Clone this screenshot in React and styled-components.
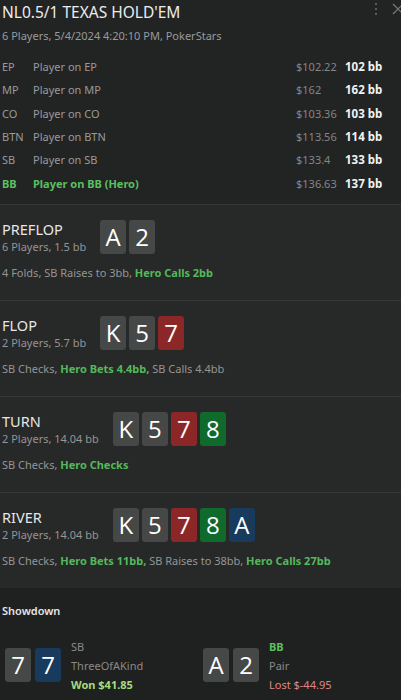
import React from "react";
import styled, { createGlobalStyle } from "styled-components";

const Global = createGlobalStyle`
  html, body { margin: 0; padding: 0; background: #222424; }
  body { font-family: "Noto Sans", "Open Sans", sans-serif; color: #e6e6e6; }
  * { box-sizing: border-box; }
`;

const Page = styled.div`
  width: 401px;
  height: 700px;
  overflow: hidden;
  background: #222424;
  display: flex;
  flex-direction: column;
`;

const Header = styled.header`
  position: relative;
  padding: 0 16px 9px 2px;
`;

const Title = styled.h1`
  margin: 0;
  font-size: 15.5px;
  font-weight: 400;
  line-height: 24px;
  color: #ececec;
`;

const Sub = styled.div`
  margin-top: 4px;
  font-size: 11px;
  line-height: 16px;
  color: #9a9a9a;
`;

const Tools = styled.div`
  position: absolute;
  top: 2px;
  right: -3px;
  display: flex;
  gap: 14px;
  align-items: center;
`;

const Table = styled.div`
  margin-top: 11px;
  display: grid;
  grid-template-columns: 31px 1fr 49px 40px;
  grid-auto-rows: 23.3px;
  align-items: center;
  font-size: 11px;
`;

const Cell = styled.div`
  color: ${(p) => (p.$hero ? "#5cbf60" : p.$dim ? "#858585" : "#9a9a9a")};
  font-weight: ${(p) => (p.$hero ? 700 : 400)};
  white-space: nowrap;
`;

const BB = styled.div`
  color: #f2f2f2;
  font-weight: 700;
  font-size: 11.5px;
  white-space: nowrap;
`;

const Street = styled.section`
  border-top: 1px solid #363838;
  background: #272828;
  padding: 15px 2px 0 2px;
  height: 96px;
`;

const StreetTop = styled.div`
  display: flex;
  align-items: center;
  gap: 14px;
`;

const StreetInfo = styled.div`
  display: flex;
  flex-direction: column;
`;

const StreetName = styled.div`
  font-size: 14.5px;
  line-height: 19px;
  color: #e6e6e6;
`;

const StreetSub = styled.div`
  font-size: 11px;
  line-height: 15px;
  color: #959595;
`;

const Cards = styled.div`
  display: flex;
  gap: ${(p) => p.$gap || 3}px;
`;

const cardColors = {
  n: "#464747",
  h: "#8c2727",
  c: "#0f6a2c",
  d: "#183a5d",
};

const Card = styled.div`
  width: 26px;
  height: 34px;
  border-radius: 3px;
  background: ${(p) => cardColors[p.$s]};
  color: #ffffff;
  font-family: "Open Sans", "Noto Sans", sans-serif;
  font-size: 24px;
  line-height: 34px;
  text-align: center;
`;

const Action = styled.div`
  margin-top: 11px;
  font-size: 11px;
  line-height: 16px;
  color: #959595;
  white-space: nowrap;
`;

const Hero = styled.span`
  color: #53b85a;
  font-weight: 700;
`;

const Showdown = styled.section`
  flex: 1;
  background: #1f2020;
  padding: 15px 0 0 2px;
`;

const ShowTitle = styled.div`
  font-size: 11px;
  font-weight: 600;
  line-height: 16px;
  color: #e6e6e6;
`;

const ShowGrid = styled.div`
  margin-top: 18px;
  padding-left: 3px;
  display: grid;
  grid-template-columns: 198px 198px;
`;

const Seat = styled.div`
  display: flex;
  align-items: center;
  gap: 10px;
`;

const SeatInfo = styled.div`
  display: flex;
  flex-direction: column;
  font-size: 11px;
  line-height: 19px;
`;

const SeatPos = styled.div`
  color: ${(p) => (p.$hero ? "#5cbf60" : "#8a8a8a")};
  font-weight: ${(p) => (p.$hero ? 700 : 400)};
`;

const SeatHand = styled.div`
  color: #8a8a8a;
`;

const Result = styled.div`
  color: ${(p) => (p.$won ? "#a6dc7c" : "#e08585")};
  font-weight: ${(p) => (p.$won ? 700 : 400)};
`;

const players = [
  ["EP", "Player on EP", "$102.22", "102 bb"],
  ["MP", "Player on MP", "$162", "162 bb"],
  ["CO", "Player on CO", "$103.36", "103 bb"],
  ["BTN", "Player on BTN", "$113.56", "114 bb"],
  ["SB", "Player on SB", "$133.4", "133 bb"],
  ["BB", "Player on BB (Hero)", "$136.63", "137 bb", true],
];

const streets = [
  {
    name: "PREFLOP",
    sub: "6 Players, 1.5 bb",
    cards: [["A", "n"], ["2", "n"]],
    action: (
      <>
        4 Folds, SB Raises to 3bb, <Hero>Hero Calls 2bb</Hero>
      </>
    ),
  },
  {
    name: "FLOP",
    sub: "2 Players, 5.7 bb",
    cards: [["K", "n"], ["5", "n"], ["7", "h"]],
    action: (
      <>
        SB Checks, <Hero>Hero Bets 4.4bb,</Hero> SB Calls 4.4bb
      </>
    ),
  },
  {
    name: "TURN",
    sub: "2 Players, 14.04 bb",
    cards: [["K", "n"], ["5", "n"], ["7", "h"], ["8", "c"]],
    action: (
      <>
        SB Checks, <Hero>Hero Checks</Hero>
      </>
    ),
  },
  {
    name: "RIVER",
    sub: "2 Players, 14.04 bb",
    cards: [["K", "n"], ["5", "n"], ["7", "h"], ["8", "c"], ["A", "d"]],
    action: (
      <>
        SB Checks, <Hero>Hero Bets 11bb,</Hero> SB Raises to 38bb,{" "}
        <Hero>Hero Calls 27bb</Hero>
      </>
    ),
  },
];

export default function App() {
  return (
    <Page>
      <Global />
      <Header>
        <Title>NL0.5/1 TEXAS HOLD'EM</Title>
        <Sub>6 Players, 5/4/2024 4:20:10 PM, PokerStars</Sub>
        <Tools>
          <svg width="4" height="14" viewBox="0 0 4 14">
            <circle cx="2" cy="2" r="1" fill="#6f6f6f" />
            <circle cx="2" cy="7" r="1" fill="#6f6f6f" />
            <circle cx="2" cy="12" r="1" fill="#6f6f6f" />
          </svg>
          <svg width="12" height="12" viewBox="0 0 12 12">
            <path d="M1 1 L11 11 M11 1 L1 11" stroke="#7a7a7a" strokeWidth="1.2" />
          </svg>
        </Tools>
        <Table>
          {players.map(([pos, name, usd, bb, hero]) => (
            <React.Fragment key={pos}>
              <Cell $hero={hero}>{pos}</Cell>
              <Cell $hero={hero}>{name}</Cell>
              <Cell $dim>{usd}</Cell>
              <BB>{bb}</BB>
            </React.Fragment>
          ))}
        </Table>
      </Header>
      {streets.map((s) => (
        <Street key={s.name}>
          <StreetTop>
            <StreetInfo>
              <StreetName>{s.name}</StreetName>
              <StreetSub>{s.sub}</StreetSub>
            </StreetInfo>
            <Cards>
              {s.cards.map(([r, suit], i) => (
                <Card key={i} $s={suit}>
                  {r}
                </Card>
              ))}
            </Cards>
          </StreetTop>
          <Action>{s.action}</Action>
        </Street>
      ))}
      <Showdown>
        <ShowTitle>Showdown</ShowTitle>
        <ShowGrid>
          <Seat>
            <Cards $gap={4}>
              <Card $s="n">7</Card>
              <Card $s="d">7</Card>
            </Cards>
            <SeatInfo>
              <SeatPos>SB</SeatPos>
              <SeatHand>ThreeOfAKind</SeatHand>
              <Result $won>Won $41.85</Result>
            </SeatInfo>
          </Seat>
          <Seat>
            <Cards $gap={4}>
              <Card $s="n">A</Card>
              <Card $s="n">2</Card>
            </Cards>
            <SeatInfo>
              <SeatPos $hero>BB</SeatPos>
              <SeatHand>Pair</SeatHand>
              <Result>Lost $-44.95</Result>
            </SeatInfo>
          </Seat>
        </ShowGrid>
      </Showdown>
    </Page>
  );
}
